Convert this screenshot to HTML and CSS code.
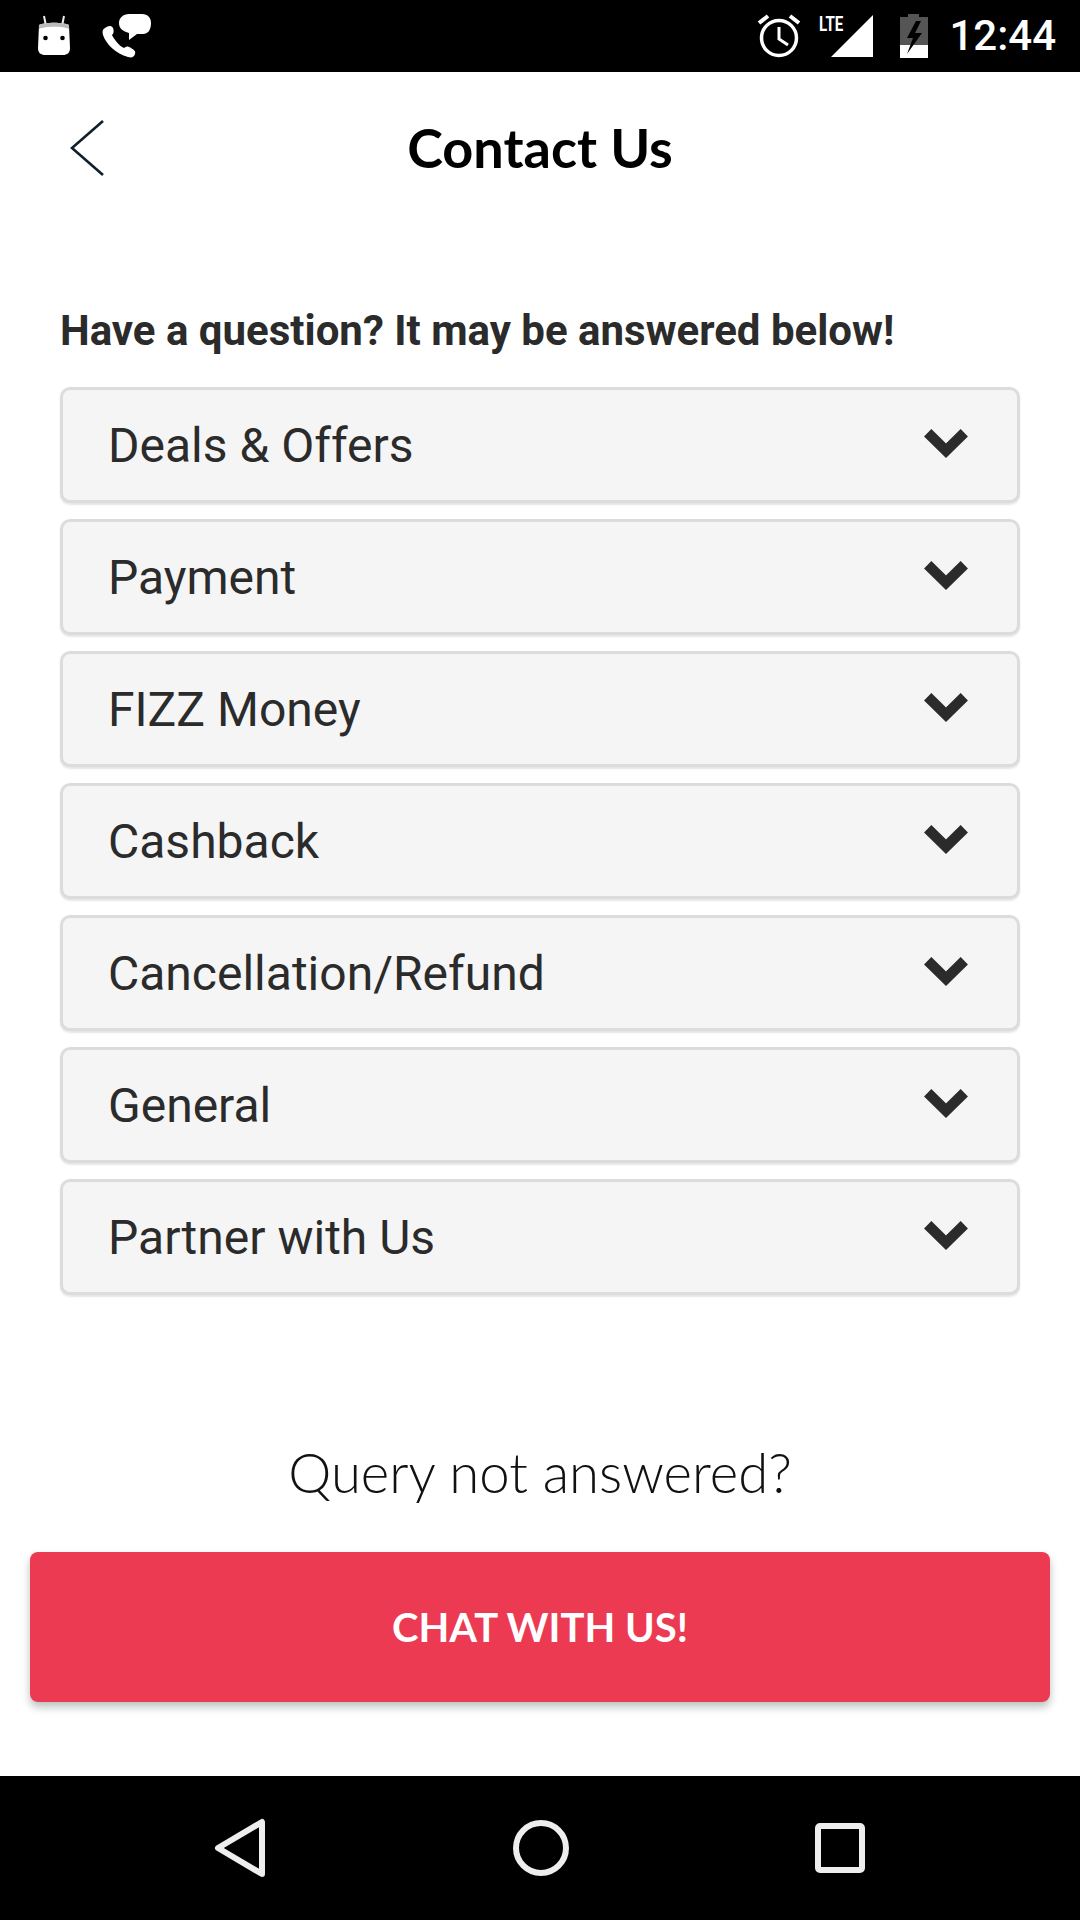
FILE: index.html
```html
<!DOCTYPE html>
<html lang="en">
<head>
<meta charset="utf-8">
<title>Contact Us</title>
<link rel="stylesheet" href="styles.css">
</head>
<body>
<div class="screen">
  <header class="statusbar">
    <div class="status-left">
      <svg class="ic-android" width="36" height="42" viewBox="0 0 36 42">
        <path d="M8 1 10 11M28 1 26 11" stroke="#eee" stroke-width="2" fill="none"/>
        <path d="M3 10C8 7 28 7 33 10L34 33C34 38 31 40 27 40H9C5 40 2 38 2 33Z" fill="#fff"/>
        <path d="M3 10C8 7 28 7 33 10L33 14C28 11 8 11 3 14Z" fill="#bbb"/>
        <circle cx="9.500" cy="23" r="2.300" fill="#000"/><circle cx="26.500" cy="23" r="2.300" fill="#000"/>
      </svg>
      <svg class="ic-call" width="50" height="46" viewBox="0 0 50 46">
        <path d="M3 15C1 16 0 18 1 22 4 31 14 41 26 44 30 45 32 44 33 41 34 38 32 37 29 35 26 33 24 33 22 35 17 33 12 26 10 22 12 20 12 18 11 15 9 12 6 13 3 15Z" fill="#fff"/>
        <path d="M27 1H40C46 1 49 5 49 10 49 17 46 21 41 21H35L27 27V20C21 18 17 16 17 10 17 5 21 1 27 1Z" fill="#fff"/>
      </svg>
    </div>
    <div class="status-right">
      <svg width="44" height="44" viewBox="0 0 44 44">
        <circle cx="22" cy="24" r="17.500" stroke="#fff" stroke-width="3.500" fill="none"/>
        <path d="M22 13V25L31 31" stroke="#fff" stroke-width="3" fill="none"/>
        <path d="M2 9 11 2M42 9 33 2" stroke="#fff" stroke-width="4" fill="none"/>
      </svg>
      <div class="signal">
        <span class="lte">LTE</span>
        <svg width="44" height="44" viewBox="0 0 44 44"><path d="M1 43 43 1V43Z" fill="#fff"/></svg>
      </div>
      <svg class="ic-battery" width="30" height="44" viewBox="0 0 30 44">
        <path d="M9 3V0H20V3H29V44H1V3Z" fill="#555"/>
        <path d="M1 31H29V44H1Z" fill="#fff"/>
        <path d="M17 7 8 24H14L8 40 23 19H16L22 7Z" fill="#000"/>
      </svg>
      <span class="clock">12:44</span>
    </div>
  </header>

  <main class="content">
    <div class="topbar">
      <button class="back" aria-label="Back">
        <svg width="36" height="58" viewBox="0 0 36 58"><path d="M34 2 3 29 34 56" stroke="#10202a" stroke-width="2.600" fill="none"/></svg>
      </button>
      <h1 class="title">Contact Us</h1>
    </div>

    <section class="faq">
      <h2 class="faq-heading">Have a question? It may be answered below!</h2>
      <ul class="faq-list">
        <li class="faq-item"><span>Deals &amp; Offers</span><svg class="chev" width="44" height="29" viewBox="0 0 44 29"><path d="M3.700 3.700 22 21.700 40.300 3.700" stroke="#2b2b2b" stroke-width="10.400" fill="none"/></svg></li>
        <li class="faq-item"><span>Payment</span><svg class="chev" width="44" height="29" viewBox="0 0 44 29"><path d="M3.700 3.700 22 21.700 40.300 3.700" stroke="#2b2b2b" stroke-width="10.400" fill="none"/></svg></li>
        <li class="faq-item"><span>FIZZ Money</span><svg class="chev" width="44" height="29" viewBox="0 0 44 29"><path d="M3.700 3.700 22 21.700 40.300 3.700" stroke="#2b2b2b" stroke-width="10.400" fill="none"/></svg></li>
        <li class="faq-item"><span>Cashback</span><svg class="chev" width="44" height="29" viewBox="0 0 44 29"><path d="M3.700 3.700 22 21.700 40.300 3.700" stroke="#2b2b2b" stroke-width="10.400" fill="none"/></svg></li>
        <li class="faq-item"><span>Cancellation/Refund</span><svg class="chev" width="44" height="29" viewBox="0 0 44 29"><path d="M3.700 3.700 22 21.700 40.300 3.700" stroke="#2b2b2b" stroke-width="10.400" fill="none"/></svg></li>
        <li class="faq-item"><span>General</span><svg class="chev" width="44" height="29" viewBox="0 0 44 29"><path d="M3.700 3.700 22 21.700 40.300 3.700" stroke="#2b2b2b" stroke-width="10.400" fill="none"/></svg></li>
        <li class="faq-item"><span>Partner with Us</span><svg class="chev" width="44" height="29" viewBox="0 0 44 29"><path d="M3.700 3.700 22 21.700 40.300 3.700" stroke="#2b2b2b" stroke-width="10.400" fill="none"/></svg></li>
      </ul>
    </section>

    <section class="chat">
      <p class="chat-q">Query not answered?</p>
      <button class="chat-btn">CHAT WITH US!</button>
    </section>
  </main>

  <nav class="navbar">
    <svg width="52" height="60" viewBox="0 0 52 60"><path d="M4 30 48 4V56Z" stroke="#eee" stroke-width="6" stroke-linejoin="round" fill="none"/></svg>
    <svg width="56" height="56" viewBox="0 0 56 56"><circle cx="28" cy="28" r="25" stroke="#eee" stroke-width="6" fill="none"/></svg>
    <svg width="50" height="50" viewBox="0 0 50 50"><rect x="3" y="3" width="44" height="44" rx="2" stroke="#eee" stroke-width="6" fill="none"/></svg>
  </nav>
</div>
</body>
</html>
```

FILE: styles.css
```css
* { box-sizing: border-box; }
html, body { margin: 0; padding: 0; }
body { background: #fff; font-family: Roboto, sans-serif; }
.screen { width: 1080px; height: 1920px; display: flex; flex-direction: column; overflow: hidden; }

.statusbar { height: 72px; flex: none; background: #000; display: flex; justify-content: space-between; align-items: center; padding: 0 24px 0 36px; }
.status-left { display: flex; align-items: center; gap: 30px; }
.status-right { display: flex; align-items: center; color: #fff; }
.signal { display: flex; align-items: flex-start; margin-left: 29px; position: relative; }
.lte { position: absolute; left: -11px; top: 1px; font: 700 21px/18px Roboto, sans-serif; transform: scaleX(.72); transform-origin: left top; }
.ic-battery { margin-left: 25px; }
.clock { margin-left: 20px; font: 500 42px/44px Roboto, sans-serif; }

.content { flex: 1; display: flex; flex-direction: column; }
.topbar { height: 152px; flex: none; display: flex; align-items: center; justify-content: center; position: relative; }
.back { position: absolute; left: 69px; top: 47px; padding: 0; border: 0; background: none; line-height: 0; }
.title { margin: 0; font: 700 54px/60px Lato, sans-serif; color: #000; }

.faq { padding: 83px 60px 0; }
.faq-heading { margin: 0 0 32px; font: 700 42px/48px Roboto, sans-serif; color: #2b2b2b; }
.faq-list { list-style: none; margin: 0; padding: 0; display: flex; flex-direction: column; gap: 16px; }
.faq-item { height: 116px; display: flex; align-items: center; justify-content: space-between; padding: 0 49px 0 45px; background: #f5f5f5; border: 3px solid #dcdcdc; border-radius: 10px; box-shadow: 0 2px 2px rgba(0,0,0,.1); font-size: 48px; color: #2b2b2b; }
.chev { margin-top: -4px; }

.chat { padding: 0 30px; margin-top: 146px; display: flex; flex-direction: column; align-items: stretch; }
.chat-q { margin: 0 0 49px; text-align: center; font: 300 54.500px/62px Lato, sans-serif; color: #111; }
.chat-btn { height: 150px; border: 0; border-radius: 8px; background: #eb3a52; color: #fff; font: 700 40px/48px Lato, sans-serif; box-shadow: 0 5px 8px rgba(80,100,90,.4); }

.navbar { height: 144px; flex: none; background: #000; display: flex; align-items: center; justify-content: space-between; padding: 0 215px 0 214px; }
```
